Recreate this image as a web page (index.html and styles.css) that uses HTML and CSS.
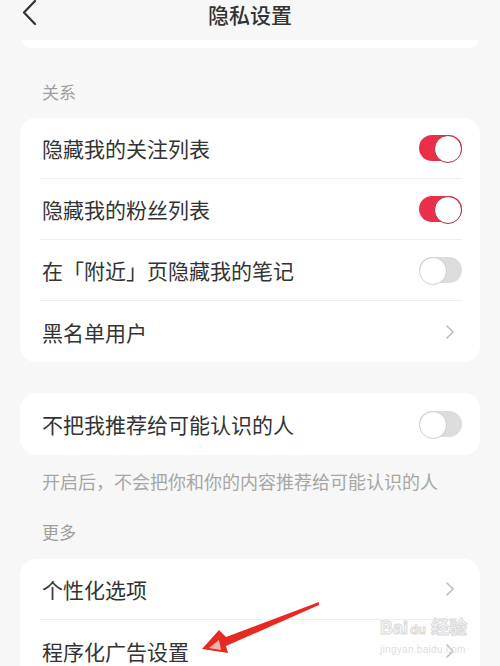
FILE: index.html
```html
<!DOCTYPE html>
<html lang="zh-CN">
<head>
  <meta charset="UTF-8">
  <meta name="viewport" content="width=device-width, initial-scale=1.0">
  <title>隐私设置</title>
  <link rel="stylesheet" href="styles.css">
</head>
<body>
  <div class="page">
    <div class="topbar">
      <span class="back">
        <svg width="16" height="26" viewBox="0 0 16 26"><path d="M13 1 L2 12.5 L13 24" fill="none" stroke="#333" stroke-width="2.2" stroke-linecap="round" stroke-linejoin="round"/></svg>
      </span>
      <h1>隐私设置</h1>
    </div>
    <div class="card-tail"></div>

    <div class="section-label label-first">关系</div>
    <div class="card">
      <div class="row">
        <span>隐藏我的关注列表</span>
        <span class="toggle on"></span>
      </div>
      <div class="row">
        <span>隐藏我的粉丝列表</span>
        <span class="toggle on"></span>
      </div>
      <div class="row">
        <span>在「附近」页隐藏我的笔记</span>
        <span class="toggle"></span>
      </div>
      <div class="row">
        <span>黑名单用户</span>
        <svg class="chev" width="10" height="16" viewBox="0 0 10 16"><path d="M2 2 L8 8 L2 14" fill="none" stroke="#bdbdbd" stroke-width="1.6" stroke-linecap="round" stroke-linejoin="round"/></svg>
      </div>
    </div>

    <div class="card card-single">
      <div class="row">
        <span>不把我推荐给可能认识的人</span>
        <span class="toggle"></span>
      </div>
    </div>
    <p class="note">开启后，不会把你和你的内容推荐给可能认识的人</p>

    <div class="section-label">更多</div>
    <div class="card">
      <div class="row">
        <span>个性化选项</span>
        <svg class="chev" width="10" height="16" viewBox="0 0 10 16"><path d="M2 2 L8 8 L2 14" fill="none" stroke="#bdbdbd" stroke-width="1.6" stroke-linecap="round" stroke-linejoin="round"/></svg>
      </div>
      <div class="row">
        <span>程序化广告设置</span>
        <svg class="chev" width="10" height="16" viewBox="0 0 10 16"><path d="M2 2 L8 8 L2 14" fill="none" stroke="#bdbdbd" stroke-width="1.6" stroke-linecap="round" stroke-linejoin="round"/></svg>
      </div>
    </div>

    <!-- annotation arrow drawn on top of the screenshot -->
    <svg class="arrow" width="500" height="666" viewBox="0 0 500 666">
      <polygon points="319,602 226,637 219,630 202,649 228,653 226,646 319,605" fill="#e62a22"/>
      <polygon points="209,648 219,640 221,650" fill="#f6b3ae"/>
    </svg>

    <div class="watermark">
      <div class="wm-logo">Bai<span class="wm-du">du</span> 经验</div>
      <div class="wm-url">jingyan.baidu.com</div>
    </div>
  </div>
</body>
</html>
```

FILE: styles.css
```css
* {
  box-sizing: border-box;
}

body {
  margin: 0;
  background-color: #f7f7f7;
  font-family: "Noto Sans CJK SC", "Noto Sans", sans-serif;
  color: #333;
}

.page {
  position: relative;
  width: 500px;
  height: 666px;
  overflow: hidden;
}

.topbar {
  height: 40px;
  display: flex;
  align-items: flex-start;
  justify-content: center;
  position: relative;
}

.topbar h1 {
  margin: 0;
  font-size: 21px;
  font-weight: 500;
  line-height: 28px;
  color: #333;
}

.back {
  position: absolute;
  left: 22px;
  top: 0;
}

.card-tail {
  height: 8px;
  margin: 0 22px;
  background: #fff;
  border-radius: 0 0 14px 14px;
}

.section-label {
  margin: 27px 0 15px;
  padding-left: 42px;
  font-size: 17px;
  line-height: 24px;
  color: #9e9e9e;
}

.label-first {
  margin-top: 32px;
  margin-bottom: 14px;
}

.card {
  margin: 0 20px;
  padding: 0 18px 0 20px;
  background: #fff;
  border-radius: 16px;
}

.card-single {
  margin-top: 31px;
}

.row {
  height: 61px;
  padding-left: 2px;
  display: flex;
  align-items: center;
  justify-content: space-between;
  font-size: 21px;
  border-bottom: 1px solid #efefef;
}

.row:last-child {
  border-bottom: none;
}

.card-single .row {
  height: 62px;
}

.toggle {
  position: relative;
  width: 43px;
  height: 26px;
  border-radius: 13px;
  background: #dcdcdc;
}

.toggle::after {
  content: "";
  position: absolute;
  top: 0;
  left: 0;
  width: 26px;
  height: 26px;
  border-radius: 50%;
  background: #fff;
  border: 1px solid #cfcfcf;
}

.toggle.on {
  background: #ea3048;
}

.toggle.on::after {
  left: auto;
  right: 0;
  border-color: #b52a3c;
}

.chev {
  margin-right: 7px;
}

.note {
  margin: 14px 0 0;
  padding-left: 42px;
  font-size: 18px;
  line-height: 24px;
  color: #a6a6a6;
}

.arrow {
  position: absolute;
  left: 0;
  top: 0;
  pointer-events: none;
}

.watermark {
  position: absolute;
  left: 380px;
  top: 617px;
  color: #e2e2e2;
  font-family: "Liberation Sans", sans-serif;
  opacity: 0.9;
}

.wm-logo {
  font-size: 18px;
  font-weight: bold;
  line-height: 22px;
  color: #fafafa;
  -webkit-text-stroke: 1px #d6d6d6;
  font-family: "Liberation Sans", "Noto Sans CJK SC", sans-serif;
}

.wm-du {
  font-size: 13px;
  margin-left: 2px;
}

.wm-url {
  margin-top: 3px;
  font-size: 10px;
  line-height: 12px;
  color: #dadada;
  letter-spacing: 0.3px;
}
```
